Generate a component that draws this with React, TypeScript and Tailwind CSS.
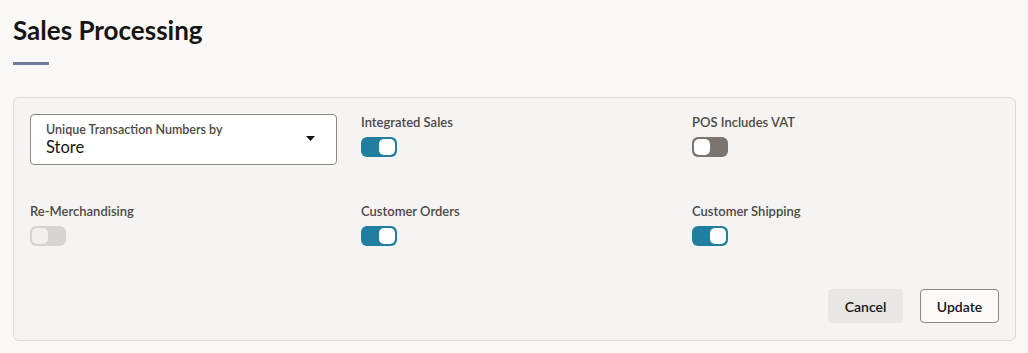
import { useState } from 'react';

type ToggleProps = { on: boolean; disabled?: boolean; onChange?: () => void };

const Toggle = ({ on, disabled, onChange }: ToggleProps) => {
    const track = disabled ? 'bg-[#d6d4d1]' : on ? 'bg-[#227e9e]' : 'bg-[#7b746f]';
    return (
        <button
            type="button"
            onClick={disabled ? undefined : onChange}
            className={`w-9 h-5 rounded-[6px] p-[2px] flex ${on ? 'justify-end' : 'justify-start'} ${track}`}
        >
            <span className={`w-4 h-4 rounded-[5px] ${disabled ? 'bg-[#f1f0ee]' : 'bg-white'}`} />
        </button>
    );
};

const Field = ({ label, children }: { label: string; children: React.ReactNode }) => (
    <div className="flex flex-col gap-[7px]">
        <span className="text-[13px] font-semibold text-[#4d4843] leading-4">{label}</span>
        {children}
    </div>
);

const App = () => {
    const [flags, setFlags] = useState({
        integrated: true,
        vat: false,
        orders: true,
        shipping: true,
    });
    const flip = (k: keyof typeof flags) => setFlags((f) => ({ ...f, [k]: !f[k] }));

    return (
        <div className="min-h-[353px] bg-[#f9f8f6] pl-[13px] pr-[12px] pt-[14px] font-['Lato','Liberation_Sans',sans-serif] text-[#161513]">
            <h1 className="text-[26px] font-bold leading-8">Sales Processing</h1>
            <div className="mt-[16px] w-9 h-[3px] bg-[#6e7a98]" />

            {/* Settings card */}
            <div className="mt-[32px] h-[244px] bg-[#f5f4f2] border border-[#dddbd8] rounded-[6px] px-[16px] pt-[16px] pb-[17px] flex flex-col">
                <div className="grid grid-cols-[331px_331px_1fr] gap-y-[38px]">
                    <div className="w-[307px] h-[51px] bg-white border border-[#8d8882] rounded-[4px] pl-[15px] pr-[21px] flex items-center justify-between">
                        <div className="flex flex-col">
                            <span className="text-[12.5px] font-semibold text-[#4d4843] leading-[15px]">Unique Transaction Numbers by</span>
                            <span className="text-[16.5px] leading-5">Store</span>
                        </div>
                        <svg width="9" height="5" viewBox="0 0 9 5" className="mb-[2px]">
                            <path d="M0 0h9L4.5 5z" fill="#161513" />
                        </svg>
                    </div>
                    <Field label="Integrated Sales">
                        <Toggle on={flags.integrated} onChange={() => flip('integrated')} />
                    </Field>
                    <Field label="POS Includes VAT">
                        <Toggle on={flags.vat} onChange={() => flip('vat')} />
                    </Field>

                    <Field label="Re-Merchandising">
                        <Toggle on={false} disabled />
                    </Field>
                    <Field label="Customer Orders">
                        <Toggle on={flags.orders} onChange={() => flip('orders')} />
                    </Field>
                    <Field label="Customer Shipping">
                        <Toggle on={flags.shipping} onChange={() => flip('shipping')} />
                    </Field>
                </div>

                <div className="mt-auto flex justify-end gap-[17px]">
                    <button className="h-[34px] w-[75px] rounded-[4px] bg-[#e9e7e4] text-[14px] font-semibold">Cancel</button>
                    <button className="h-[34px] w-[79px] rounded-[4px] border border-[#8d8882] bg-[#fbfaf9] text-[14px] font-semibold">Update</button>
                </div>
            </div>
        </div>
    );
};

export default App;
